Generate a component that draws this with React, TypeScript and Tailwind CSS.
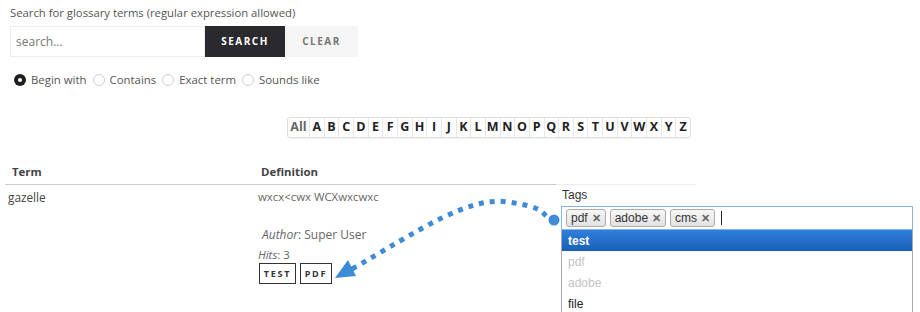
import React from 'react';

const letters = 'ABCDEFGHIJKLMNOPQRSTUVWXYZ'.split('');

const Radio = ({ checked, label }: { checked?: boolean; label: string }) => (
  <label className="flex items-center gap-[5px]">
    {checked ? (
      <span className="w-[12px] h-[12px] rounded-full bg-[#1f1f1f] flex items-center justify-center">
        <span className="w-[4px] h-[4px] rounded-full bg-white" />
      </span>
    ) : (
      <span className="w-[12px] h-[12px] rounded-full border border-[#cfcfcf] bg-white" />
    )}
    <span>{label}</span>
  </label>
);

const Chip = ({ label }: { label: string }) => (
  <span className="flex items-center gap-[4px] h-[18px] px-[4px] border border-[#aaaaaa] rounded-[3px] bg-gradient-to-b from-[#f6f6f6] to-[#e2e2e2] text-[12px] text-[#333]">
    {label}
    <span className="text-[11px] font-bold text-[#666] leading-none">✕</span>
  </span>
);

export default function App() {
  return (
    <div className="relative w-[920px] h-[312px] overflow-hidden bg-white text-[11.4px] text-[#555] [font-family:'Open_Sans',sans-serif]">
      {/* Search header */}
      <div className="pl-[10px] pt-[4px] leading-[18px] text-[11.3px]">Search for glossary terms (regular expression allowed)</div>
      <div className="flex ml-[10px] mt-[4px] h-[31px]">
        <div className="w-[195px] border border-[#eeeeee] flex items-center pl-[5px] text-[#777] text-[12px]">search...</div>
        <div className="w-[80px] bg-[#2a2a2e] text-white text-[10px] font-bold tracking-[1.5px] flex items-center justify-center">SEARCH</div>
        <div className="w-[73px] bg-[#f5f5f5] text-[#777] text-[10px] font-bold tracking-[1.5px] flex items-center justify-center">CLEAR</div>
      </div>

      {/* Search mode */}
      <div className="flex items-center gap-[6px] ml-[14px] mt-[13px] h-[20px] text-[#555] text-[11.4px]">
        <Radio checked label="Begin with" />
        <Radio label="Contains" />
        <Radio label="Exact term" />
        <Radio label="Sounds like" />
      </div>

      {/* Alphabet */}
      <div className="flex ml-[287px] mt-[27px] w-[404px] h-[21px] border border-[#dddddd] rounded-[3px] text-[12.5px] font-bold text-[#222] shadow-[0_1px_1px_rgba(0,0,0,0.04)]">
        <span className="w-[21px] flex items-center justify-center text-[#666]">All</span>
        {letters.map((l) => (
          <span key={l} className="flex-1 flex items-center justify-center border-l border-[#e6e6e6]">
            {l}
          </span>
        ))}
      </div>

      {/* Table + tag editor */}
      <div className="flex items-start mt-[22px]">
        <div className="ml-[5px] w-[551px]">
          <div className="flex h-[25px] items-center border-b border-[#cccccc] font-bold text-[#444]">
            <div className="w-[250px] pl-[7px]">Term</div>
            <div className="pl-[6px]">Definition</div>
          </div>
          <div className="flex pt-[3px] leading-[18px]">
            <div className="w-[250px] pl-[3px] text-[#444] text-[11.8px]">gazelle</div>
            <div className="pl-[3px] text-[#666]">
              <div>wxcx&lt;cwx WCXwxcwxc</div>
              <div className="mt-[20px] pl-[4px] text-[12px]">
                <i>Author</i>: Super User
              </div>
              <div className="leading-[16px] mt-[3px]">
                <i>Hits</i>: 3
              </div>
              <div className="flex gap-[4px] ml-[1px]">
                <span className="w-[37px] h-[21px] border border-[#333] flex items-center justify-center text-[9px] font-bold tracking-[1.8px] text-[#333]">TEST</span>
                <span className="w-[32px] h-[21px] border border-[#333] flex items-center justify-center text-[9px] font-bold tracking-[1.8px] text-[#333]">PDF</span>
              </div>
            </div>
          </div>
        </div>

        <div className="mt-[24px] [font-family:'Liberation_Sans',Arial,sans-serif] text-[#333]">
          <div className="w-[140px] border-t border-[#eeeeee]" />
          <div className="pl-[6px] pt-[2px] text-[12px] leading-[16px]">Tags</div>
          <div className="ml-[5px] w-[352px] h-[24px] mt-[3px] border border-[#87b4e6] flex items-center gap-[4px] pl-[4px]">
            <Chip label="pdf" />
            <Chip label="adobe" />
            <Chip label="cms" />
            <span className="w-[1px] h-[14px] bg-[#222] ml-[2px]" />
          </div>
          <div className="ml-[5px] w-[352px] border-x border-[#aaaaaa] text-[12px]">
            <div className="h-[21px] flex items-center pl-[6px] font-bold text-white bg-gradient-to-b from-[#2f80dd] to-[#1a5fb8]">test</div>
            <div className="h-[21px] flex items-center pl-[6px] text-[#c4c4c4]">pdf</div>
            <div className="h-[21px] flex items-center pl-[6px] text-[#c4c4c4]">adobe</div>
            <div className="h-[21px] flex items-center pl-[6px] text-[#222]">file</div>
          </div>
        </div>
      </div>

      {/* Annotation arrow */}
      <svg className="absolute inset-0 pointer-events-none" width="920" height="312" viewBox="0 0 920 312">
        <path
          d="M 352 269 C 420 230, 468 196, 508 202 S 540 213, 550 219"
          fill="none"
          stroke="#3f8bd6"
          strokeWidth="5"
          strokeDasharray="5 6"
        />
        <circle cx="554" cy="220" r="5.5" fill="#3f8bd6" />
        <polygon points="335,278 348,260 356,276" fill="#3f8bd6" />
      </svg>
    </div>
  );
}
